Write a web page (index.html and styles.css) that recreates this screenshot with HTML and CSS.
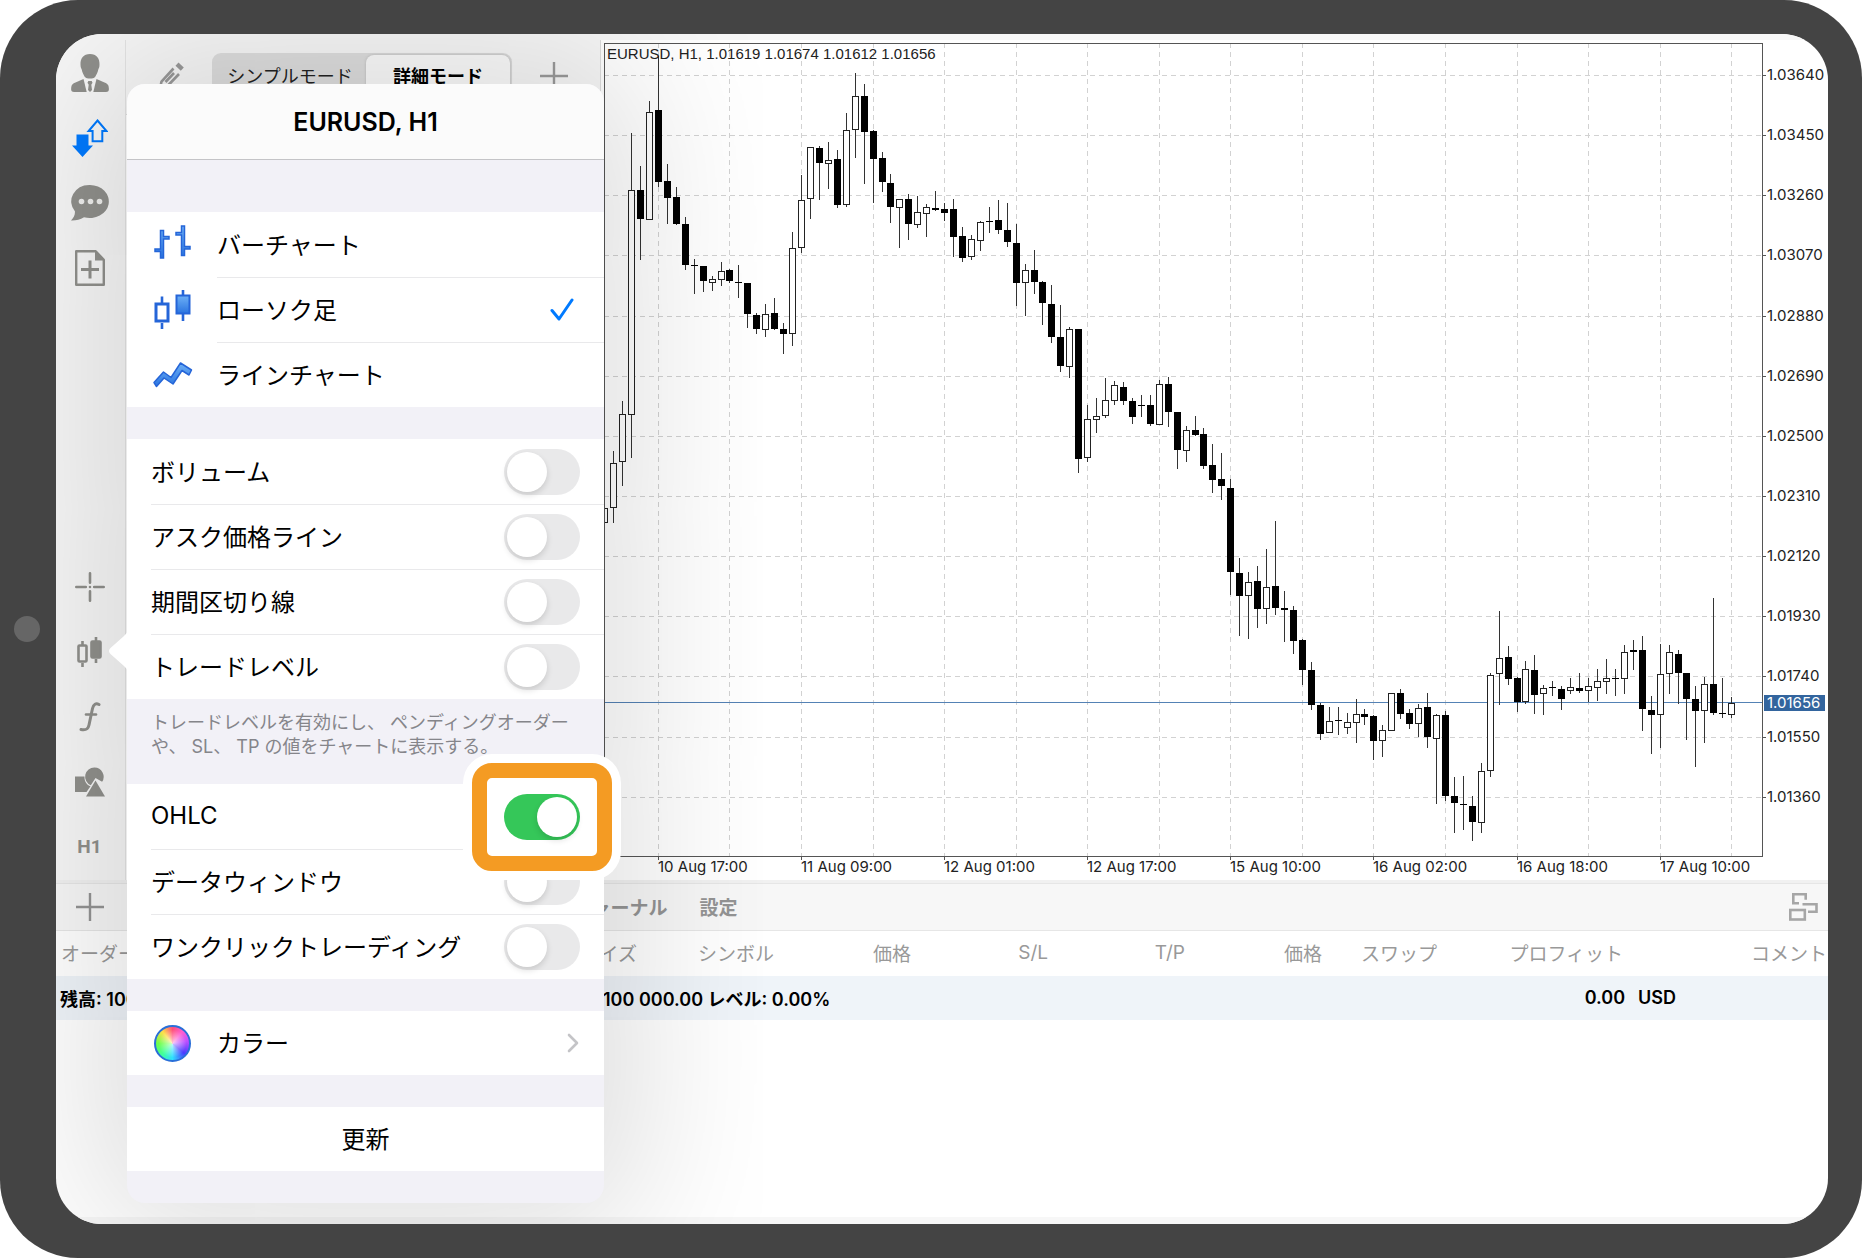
FILE: index.html
```html
<!DOCTYPE html>
<html lang="ja">
<head>
<meta charset="utf-8">
<meta name="viewport" content="width=device-width, initial-scale=1">
<title>EURUSD, H1</title>
<link rel="stylesheet" href="styles.css">
</head>
<body>
<div class="device">
  <span class="home-button"></span>
  <div class="screen">
    <div class="strip-top"></div>
    <main class="workspace">
      <nav class="sidebar">
        <div class="side-group">
          <button class="side-btn" aria-label="アカウント">
            <svg width="38" height="38" viewBox="0 0 38 38" fill="currentColor"><path d="M19 0c6.500 0 9.800 4.500 9.500 10.500 0 3-.8 4-1.300 5.200C26.500 19.500 24 23 24 23c-1.500 2-8.500 2-10 0 0 0-2.500-3.500-3.200-7.300-.5-1.200-1.300-2.200-1.300-5.200C9.200 4.500 12.500 0 19 0z"/><path d="M12.500 25l3.200 13H3c-2 0-3-1-2.900-3 .2-4 1-5 4.400-6.500z"/><path d="M25.500 25l-3.200 13H35c2 0 3-1 2.900-3-.2-4-1-5-4.400-6.500z"/><path d="M17.300 27h3.400l.8 1.800-1.200 2L21 36l-2 2-2-2 .7-5.200-1.200-2z"/></svg>
          </button>
          <button class="side-btn side-btn-active" aria-label="トレード">
            <svg width="36" height="38" viewBox="0 0 36 38"><path d="M4.500 15.500h12v11H21L10.500 38 0 26.500h4.500z" fill="currentColor"/><path d="M25.500 1.500l9 10.500h-4.200v10.200H20.600V12h-4z" fill="none" stroke="currentColor" stroke-width="2"/></svg>
          </button>
          <button class="side-btn" aria-label="チャット">
            <svg width="38" height="36" viewBox="0 0 38 36"><path d="M19 0a19 16.500 0 1 1-6 32.200C9 34.500 5 35.700 0 35.500 2.500 33 4 30.500 4 26.500A18.500 16.500 0 0 1 19 0z" fill="currentColor"/><g fill="#efefed"><circle cx="10.500" cy="16.500" r="2.800"/><circle cx="19.500" cy="16.500" r="2.800"/><circle cx="28.500" cy="16.500" r="2.800"/></g></svg>
          </button>
          <button class="side-btn" aria-label="新規チャート">
            <svg width="30" height="36" viewBox="0 0 30 36" fill="none" stroke="currentColor" stroke-width="2.400"><path d="M1.200 1.200h19.500l8.100 8.600v25H1.200z" stroke-linejoin="round"/><path d="M20 1v9.500h9z" fill="currentColor" stroke="none"/><path d="M6 19.500h18M15 10.500v18" stroke-width="3"/></svg>
          </button>
        </div>
        <div class="side-group">
          <button class="side-btn" aria-label="十字線">
            <svg width="30" height="30" viewBox="0 0 30 30" fill="none" stroke="currentColor" stroke-width="2.600" stroke-linecap="round"><path d="M1.300 15h9.500M19.200 15h9.500M15 1.300v9.500M15 19.200v9.500M15 15h.01"/></svg>
          </button>
          <button class="side-btn" aria-label="チャート種類">
            <svg width="25" height="30" viewBox="0 0 25 30" fill="none" stroke="currentColor" stroke-width="2.600"><path d="M5.500 4v4M5.500 26v4M19 0v4M19 22v4"/><rect x="1.500" y="8.500" width="8" height="16" rx="1"/><rect x="14.500" y="4.500" width="9" height="16" rx="1" fill="currentColor"/></svg>
          </button>
          <button class="side-btn" aria-label="インディケータ">
            <svg width="22" height="30" viewBox="0 0 22 30" fill="none" stroke="currentColor" stroke-width="3" stroke-linecap="round"><path d="M20 2.500c-3-1.500-5.500-.5-6.500 4L10 23c-1 4.500-3 5.500-8 4.500"/><path d="M7 12.500h10" stroke-width="2.600"/></svg>
          </button>
          <button class="side-btn" aria-label="オブジェクト">
            <svg width="32" height="30" viewBox="0 0 32 30" fill="currentColor"><path d="M1 9.500h9.500c-.3 5 2.500 8.500 6 9.800L12.500 25H1z"/><path d="M20.500.5a9.200 9.200 0 0 1 7.600 14.300L21.500 11l-4.700 7.200A9.200 9.200 0 0 1 20.500.5z"/><path d="M21.500 13.500L31 29.500H12z"/></svg>
          </button>
          <button class="side-btn side-period">H1</button>
        </div>
      </nav>

      <section class="quotes">
        <div class="quotes-bar">
          <button class="icon-btn" aria-label="編集">
            <svg width="26" height="28" viewBox="0 0 26 28" fill="none" stroke="currentColor" stroke-width="2.600"><path d="M15.500 6.500L3.500 19.500 2 26.500l7-2L21 12"/><path d="M7.500 20l8.500-9"/><path d="M17.500 3.800l3-3.300 5.300 5-3 3.200z" fill="currentColor" stroke="none"/></svg>
          </button>
          <div class="segmented">
            <button class="segment">シンプルモード</button>
            <button class="segment segment-on">詳細モード</button>
          </div>
          <button class="icon-btn" aria-label="追加">
            <svg width="28" height="28" viewBox="0 0 28 28" fill="none" stroke="currentColor" stroke-width="2.400"><path d="M0 14h28M14 0v28"/></svg>
          </button>
        </div>
      </section>

      <section class="chart">
        <svg id="chart" class="chart-svg" viewBox="604 40 1224 840" role="img" aria-label="EURUSD, H1"></svg>
      </section>
    </main>

    <section class="toolbox">
      <div class="toolbox-bar">
        <button class="toolbox-add" aria-label="新規オーダー">
          <svg width="28" height="28" viewBox="0 0 28 28" fill="none" stroke="currentColor" stroke-width="2.400"><path d="M0 14h28M14 0v28"/></svg>
        </button>
        <div class="tabs">
          <button class="tab">トレード</button>
          <button class="tab">履歴</button>
          <button class="tab">ニュース</button>
          <button class="tab">メールボックス</button>
          <button class="tab">ジャーナル</button>
          <button class="tab">設定</button>
        </div>
        <button class="undock" aria-label="ウィンドウ切り替え">
          <svg width="29" height="28" viewBox="0 0 29 28" fill="none" stroke="currentColor" stroke-width="2.600"><path d="M10 10.300H4.300v-9h12.400v5.500"/><path d="M13.500 11.300h14v7.500h-8.500"/><rect x="1.300" y="17" width="14.500" height="9.500"/></svg>
        </button>
      </div>
      <table class="orders">
        <colgroup>
          <col class="w-order"><col class="w-time"><col class="w-type"><col class="w-size"><col class="w-symbol"><col class="w-price"><col class="w-price"><col class="w-price"><col class="w-price"><col class="w-swap"><col class="w-profit"><col>
        </colgroup>
        <thead>
          <tr><th class="left">オーダー</th><th aria-label="時間"></th><th aria-label="タイプ"></th><th>サイズ</th><th>シンボル</th><th>価格</th><th>S/L</th><th>T/P</th><th>価格</th><th>スワップ</th><th>プロフィット</th><th class="last">コメント</th></tr>
        </thead>
        <tbody>
          <tr>
            <td colspan="10"><div class="balance"><span class="balance-main">残高: 100 000.00</span><span>100 000.00 レベル: 0.00%</span></div></td>
            <td class="profit">0.00</td>
            <td class="currency">USD</td>
          </tr>
        </tbody>
      </table>
    </section>
    <div class="strip-bottom"></div>

    <aside class="popover">
      <svg class="popover-arrow" width="20" height="46" viewBox="0 0 20 46"><path d="M20 0c0 4-1.500 5.500-4 8L2.500 20q-3 3 0 6L16 38c2.500 2.500 4 4 4 8z" fill="#fff"/></svg>
      <h1 class="popover-title">EURUSD, H1</h1>
      <div class="group group-first">
        <label class="row row-icon">
          <svg class="row-glyph" width="37" height="39" viewBox="0 0 37 39"><defs><linearGradient id="blue" x1="0" y1="0" x2="0" y2="1"><stop offset="0" stop-color="#6db0f6"/><stop offset="1" stop-color="#2a74e0"/></linearGradient></defs><path d="M6.500 5.500h3v6H15v2.500H9.500V33h-3v-6.500H1V24h5.500zM27.500 1h3v20.500H36V24h-5.500v6.500h-3V10H22V7.500h5.500z" fill="url(#blue)" stroke="#2565d8" stroke-width="1.500"/></svg>
          <span class="row-text">バーチャート</span><input class="choice" type="radio" name="kind">
        </label>
        <label class="row row-icon">
          <svg class="row-glyph" width="37" height="39" viewBox="0 0 37 39"><path d="M8 6.500V13M8 33v6M29 0v6M29 23v8" stroke="#2565d8" stroke-width="2.600"/><rect x="2" y="14" width="12" height="17" fill="#fff" stroke="#2565d8" stroke-width="3"/><rect x="22.500" y="5.500" width="13" height="18" fill="url(#blue)" stroke="#2565d8" stroke-width="2"/></svg>
          <span class="row-text">ローソク足</span><input class="choice" type="radio" name="kind" checked>
          <svg class="tick" width="24" height="23" viewBox="0 0 24 23" fill="none" stroke="#007aff" stroke-width="3" stroke-linecap="round" stroke-linejoin="round"><path d="M2 12.500l7 8.500L22 2"/></svg>
        </label>
        <label class="row row-icon">
          <svg class="row-glyph" width="37" height="26" viewBox="0 0 37 26"><path d="M0 20.500L9.500 10l7.500 5.500L26.500 1 37.500 8l-2.500 5-7-4.500L19 22l-9-6-7.500 8.500z" fill="url(#blue)" stroke="#2565d8" stroke-width="1.500" stroke-linejoin="round"/></svg>
          <span class="row-text">ラインチャート</span><input class="choice" type="radio" name="kind">
        </label>
      </div>
      <div class="group">
        <label class="row"><span class="row-text">ボリューム</span><input class="switch" type="checkbox"></label>
        <label class="row"><span class="row-text">アスク価格ライン</span><input class="switch" type="checkbox"></label>
        <label class="row"><span class="row-text">期間区切り線</span><input class="switch" type="checkbox"></label>
        <label class="row"><span class="row-text">トレードレベル</span><input class="switch" type="checkbox"></label>
      </div>
      <p class="note">トレードレベルを有効にし、 ペンディングオーダーや、 SL、 TP の値をチャートに表示する。</p>
      <div class="group group-flush">
        <label class="row"><span class="row-text">OHLC</span><span class="highlight"><input class="switch" type="checkbox" checked></span></label>
        <label class="row"><span class="row-text">データウィンドウ</span><input class="switch" type="checkbox"></label>
        <label class="row"><span class="row-text">ワンクリックトレーディング</span><input class="switch" type="checkbox"></label>
      </div>
      <div class="group">
        <button class="row row-icon row-single"><span class="wheel"></span><span class="row-text">カラー</span>
          <svg class="chevron" width="12" height="20" viewBox="0 0 12 20" fill="none" stroke="#c4c4c7" stroke-width="2.600" stroke-linecap="round" stroke-linejoin="round"><path d="M2 2l8 8-8 8"/></svg>
        </button>
      </div>
      <div class="group">
        <button class="row row-single row-center">更新</button>
      </div>
    </aside>
  </div>
</div>
<script src="chart.js"></script>
</body>
</html>
```
FILE: styles.css
```css
* { box-sizing: border-box; }

body {
  margin: 0;
  background: #fff;
  color: #000;
  font-family: Inter, "Noto Sans CJK JP", sans-serif;
  font-size: 19px;
}

button {
  margin: 0;
  padding: 0;
  border: 0;
  background: none;
  color: inherit;
  font: inherit;
}

svg { display: block; flex: none; }

.device {
  position: relative;
  display: flex;
  min-height: 100vh;
  padding: 34px 34px 34px 56px;
  border-radius: 78px;
  background: #444;
}

.home-button {
  position: absolute;
  left: 14px;
  top: calc(50% - 13px);
  width: 26px;
  height: 26px;
  border-radius: 50%;
  background: #666;
}

.screen {
  position: relative;
  display: flex;
  flex: 1;
  flex-direction: column;
  min-width: 0;
  overflow: hidden;
  border-radius: 46px;
  background: #fff;
}

.strip-top { height: 6px; background: #f7f7f7; }
.strip-bottom { height: 7px; margin-top: auto; background: #f7f7f7; }

.workspace { display: flex; }

/* left tool column */
.sidebar {
  display: flex;
  flex: none;
  flex-direction: column;
  justify-content: space-between;
  width: 70px;
  padding: 0 2px 1px 0;
  border-right: 1px solid #e4e4e4;
  background: #f7f7f7;
}

.side-group { display: flex; flex-direction: column; }

.side-btn {
  display: flex;
  align-items: center;
  justify-content: center;
  height: 65px;
  color: #90908c;
}

.side-btn-active { color: #007aff; }
.side-period { font-size: 19px; font-weight: 700; font-family: Roboto, sans-serif; }

/* quotes panel */
.quotes {
  flex: none;
  width: 478px;
  padding-right: 3px;
}

.quotes-bar {
  display: flex;
  align-items: center;
  gap: 28px;
  height: 75px;
  padding: 0 32px 2px;
  border-right: 1px solid #ddd;
  border-bottom: 1px solid #ddd;
  background: #f7f7f7;
}

.icon-btn { color: #9a9a9a; }

.segmented {
  display: flex;
  flex: 1;
  height: 46px;
  padding: 2px;
  border-radius: 9px;
  background: #dedede;
}

.segment { flex: 1; padding-bottom: 2px; font-size: 18px; color: #222; }
.segment-on { flex: none; width: 144px; border-radius: 8px; background: #fbfbfb; font-weight: 700; color: #000; box-shadow: 0 0 3px #bbb; }

/* chart */
.chart { flex: 1; min-width: 0; }
.chart-svg { width: 100%; height: auto; }
.grid { stroke: #d2d2d2; stroke-dasharray: 5 4; }
.frame { fill: none; stroke: #555; }
.wick { stroke: #333; }
.body-up { fill: #fff; stroke: #222; }
.body-down { fill: #000; }
.price-line { stroke: #5482b5; }
.price-tag { fill: #33659e; }
.axis { fill: #222; font-size: 15px; }
.axis-now { fill: #fff; }
.ohlc { fill: #222; font: 15px "Liberation Sans", sans-serif; }

/* terminal */
.toolbox { border-top: 3px solid #f1f1f1; }

.toolbox-bar {
  display: flex;
  align-items: center;
  height: 48px;
  border-top: 1px solid #e6e6e6;
  border-bottom: 1px solid #e6e6e6;
  background: #f7f7f7;
  color: #949494;
}

.toolbox-add { display: flex; justify-content: center; width: 68px; }
.tabs { display: flex; flex: 1; gap: 32px; padding-bottom: 2px; }
.tab { font-weight: 700; white-space: nowrap; }
.undock { margin-right: 10px; color: #a6a6a6; }

.orders {
  width: 100%;
  border-collapse: collapse;
  table-layout: fixed;
  white-space: nowrap;
}

.w-order { width: 130px; }
.w-time { width: 180px; }
.w-type { width: 130px; }
.w-size { width: 146px; }
.w-symbol { width: 137px; }
.w-price { width: 137px; }
.w-swap { width: 115px; }
.w-profit { width: 186px; }

.orders th {
  height: 45px;
  padding: 0 5px 2px;
  color: #999;
  font-weight: 400;
  text-align: right;
}

.orders .left { text-align: left; }
.orders .last { padding-right: 1px; }

.orders td {
  height: 44px;
  padding: 0 4px 1px;
  background: #eff4f9;
  font-size: 18px;
  font-weight: 600;
}

.balance { display: flex; }
.balance-main { flex: none; width: 543px; }
.orders .profit { padding-right: 3px; text-align: right; }
.orders .currency { padding-left: 10px; }

/* popover */
.popover {
  position: absolute;
  left: 71px;
  top: 50px;
  width: 477px;
  padding-bottom: 32px;
  border-radius: 18px;
  background: #f2f1f7;
  box-shadow: 0 0 160px 30px rgba(0, 0, 0, .14);
}

.popover-arrow { position: absolute; left: -19px; top: 544px; }

.popover-title {
  height: 76px;
  margin: 0;
  border-bottom: 1px solid #c4c4c7;
  border-radius: 18px 18px 0 0;
  background: #fbfbfb;
  font-size: 25px;
  font-weight: 600;
  line-height: 76px;
  text-align: center;
}

.group { margin-top: 32px; background: #fff; }
.group-first { margin-top: 52px; }
.group-flush { margin-top: 0; }

.row {
  position: relative;
  display: flex;
  align-items: center;
  width: 100%;
  height: 65px;
  padding: 0 24px;
  font-size: 24px;
  text-align: left;
}

.row-single { height: 64px; }
.row-center { justify-content: center; padding-bottom: 4px; }
.row-icon { gap: 26px; padding-left: 27px; }
.row-glyph { overflow: visible; }
.row-text { flex: 1; padding-bottom: 3px; white-space: nowrap; }

.row + .row::before {
  content: "";
  position: absolute;
  top: 0;
  left: 24px;
  right: 0;
  border-top: 1px solid #e9e9eb;
}

.row-icon + .row-icon::before { left: 90px; }

.choice {
  position: absolute;
  opacity: 0;
}

.tick { margin-right: 6px; }
.chevron { margin-right: 1px; }

.switch {
  appearance: none;
  position: relative;
  flex: none;
  width: 76px;
  height: 46px;
  margin: 0;
  border-radius: 23px;
  background: #e9e9ea;
}

.switch::after {
  content: "";
  position: absolute;
  left: 3px;
  top: 3px;
  width: 40px;
  height: 40px;
  border-radius: 50%;
  background: #fff;
  box-shadow: 0 3px 6px rgba(0, 0, 0, .14);
}

.switch:checked { background: #35c759; }
.switch:checked::after { left: 33px; }

.highlight {
  z-index: 1;
  display: flex;
  flex: none;
  margin: 0 -32px;
  padding: 16px 17px;
  border: 15px solid #f49b23;
  border-radius: 20px;
  background: #fff;
  box-shadow: 0 0 0 9px #fff;
}

.note {
  height: 85px;
  margin: 0;
  padding: 12px 24px 0;
  color: #85858a;
  font-size: 18px;
  line-height: 24px;
}

.wheel {
  width: 37px;
  height: 37px;
  border: 2px solid #2a6fd8;
  border-radius: 50%;
  background:
    radial-gradient(circle, rgba(255, 255, 255, .7), rgba(255, 255, 255, 0) 60%),
    conic-gradient(#ff4f7a, #ff5fd0 40deg, #c050ff 80deg, #4a3cff 130deg, #2fe0ff 180deg, #3dffa0 220deg, #6dff4a 270deg, #ffe04a 320deg, #ff4f7a);
}
```
FILE: chart.js
```js
// Each candle: high, body top, body bottom, low, 1 = falling / 0 = rising.
const candles = [
  [508,508,522,522,0],[451,463,507,522,0],[401,414,461,485,0],[133,190,414,457,0],[166,190,219,259,1],[101,112,219,219,0],
  [56,110,182,186,1],[164,181,198,223,1],[187,197,224,224,1],[217,224,265,269,1],[259,265,265,293,1],[266,266,281,291,1],[276,279,282,290,0],[262,271,279,285,0],
  [269,270,281,282,1],[265,282,282,297,1],[283,283,314,327,1],[313,315,329,333,1],[304,314,329,336,0],[298,313,329,329,1],[323,329,334,353,1],[232,248,333,345,0],
  [175,200,247,252,0],[147,147,198,218,0],[146,148,163,199,1],[142,160,163,188,0],[150,159,205,207,1],[113,130,204,206,0],[73,96,129,157,0],[84,96,132,183,1],
  [130,131,159,202,1],[152,158,182,191,1],[174,183,207,222,1],[199,199,207,247,0],[194,199,224,239,1],[196,212,224,227,0],[204,207,213,236,0],[191,208,210,210,1],
  [203,209,213,220,1],[199,209,237,256,1],[227,236,258,261,1],[235,239,256,259,0],[221,222,240,250,0],[207,221,222,232,1],[200,220,230,233,1],[203,230,242,246,1],
  [224,243,283,305,1],[264,270,282,315,0],[250,270,282,293,1],[281,282,303,324,1],[285,304,337,342,1],[305,337,366,371,1],[327,329,366,377,0],[329,329,459,472,1],
  [405,419,457,461,0],[398,416,419,432,0],[378,400,415,417,0],[381,385,400,404,0],[382,387,401,404,1],[398,401,417,423,1],[395,405,406,416,1],[395,405,424,425,1],
  [380,384,424,424,0],[377,384,412,426,1],[412,412,450,468,1],[426,430,450,461,0],[416,430,435,435,1],[428,434,466,468,1],[444,465,480,492,1],[453,479,486,499,1],
  [479,488,572,594,1],[558,573,596,635,1],[572,582,595,638,0],[566,581,609,627,1],[549,587,608,623,0],[521,586,608,614,1],[591,608,610,641,1],[606,610,641,653,1],
  [639,640,670,684,1],[662,670,705,709,1],[703,705,734,739,1],[707,721,732,732,0],[707,720,721,734,1],[713,722,727,733,0],[699,714,722,742,0],[709,714,717,724,1],
  [715,716,741,759,1],[725,730,740,756,0],[693,693,730,730,0],[689,693,714,718,1],[709,713,724,728,1],[704,708,723,736,0],[693,707,737,747,1],[714,715,738,803,0],
  [711,715,796,800,1],[777,796,803,832,1],[776,804,805,829,1],[796,806,822,840,1],[763,771,822,832,0],[673,675,770,776,0],[611,658,673,704,0],[646,657,679,684,1],
  [677,678,702,711,1],[661,669,701,703,0],[655,670,695,713,1],[685,688,693,714,0],[681,687,687,695,1],[686,689,699,709,1],[678,687,690,693,0],[673,688,691,692,1],
  [678,686,690,701,0],[669,681,687,700,0],[659,678,681,693,0],[669,678,678,695,1],[645,652,678,693,0],[640,650,652,669,1],[636,650,709,730,1],[696,710,715,753,1],
  [644,674,714,747,0],[645,652,673,693,0],[650,654,673,703,1],[673,673,699,739,1],[686,699,711,766,1],[677,684,710,742,0],[598,684,713,714,1],[678,713,713,717,1],
  [697,703,714,717,0]
];

const prices = ['1.03640', '1.03450', '1.03260', '1.03070', '1.02880', '1.02690', '1.02500',
  '1.02310', '1.02120', '1.01930', '1.01740', '1.01550', '1.01360'];
const dates = ['10 Aug 17:00', '11 Aug 09:00', '12 Aug 01:00', '12 Aug 17:00',
  '15 Aug 10:00', '16 Aug 02:00', '16 Aug 18:00', '17 Aug 10:00'];

const plot = { left: 604, top: 43, right: 1763, bottom: 856 };
const step = 8.944;
const columnX = i => Math.floor(658.4 + step * i) + 0.5;
const svg = document.getElementById('chart');

function add(tag, cls, attrs, text) {
  const node = document.createElementNS('http://www.w3.org/2000/svg', tag);
  node.setAttribute('class', cls);
  for (const key in attrs) node.setAttribute(key, attrs[key]);
  if (text) node.textContent = text;
  svg.appendChild(node);
}
const line = (cls, x1, y1, x2, y2) => add('line', cls, { x1, y1, x2, y2 });

prices.forEach((price, i) => {
  const y = Math.floor(75.4 + 60.16 * i) + 0.5;
  line('grid', plot.left, y, plot.right, y);
  line('frame', plot.right, y, plot.right + 3, y);
  add('text', 'axis', { x: plot.right + 4, y: y + 4.5 }, price);
});
for (let i = 0; i < 16; i++) line('grid', columnX(i * 8), plot.top, columnX(i * 8), plot.bottom);
dates.forEach((date, i) => {
  const x = columnX(i * 16);
  line('frame', x, plot.bottom, x, plot.bottom + 4);
  add('text', 'axis', { x: x - 0.5, y: 872 }, date);
});

line('price-line', plot.left, 702.5, plot.right, 702.5);

candles.forEach(([high, top, bottom, low, falling], i) => {
  const x = columnX(i - 6);
  line('wick', x, high, x, low + 1);
  if (falling) add('rect', 'body-down', { x: x - 3.5, y: top, width: 7, height: Math.max(1, bottom - top) });
  else add('rect', 'body-up', { x: x - 3, y: top + 0.5, width: 6, height: bottom - top });
});

add('rect', 'frame', { x: plot.left + 0.5, y: plot.top + 0.5, width: plot.right - plot.left - 1, height: plot.bottom - plot.top });
add('text', 'ohlc', { x: 607, y: 59 }, 'EURUSD, H1, 1.01619 1.01674 1.01612 1.01656');
add('rect', 'price-tag', { x: 1764, y: 695, width: 61, height: 16 });
add('text', 'axis axis-now', { x: plot.right + 4, y: 708 }, '1.01656');
```
